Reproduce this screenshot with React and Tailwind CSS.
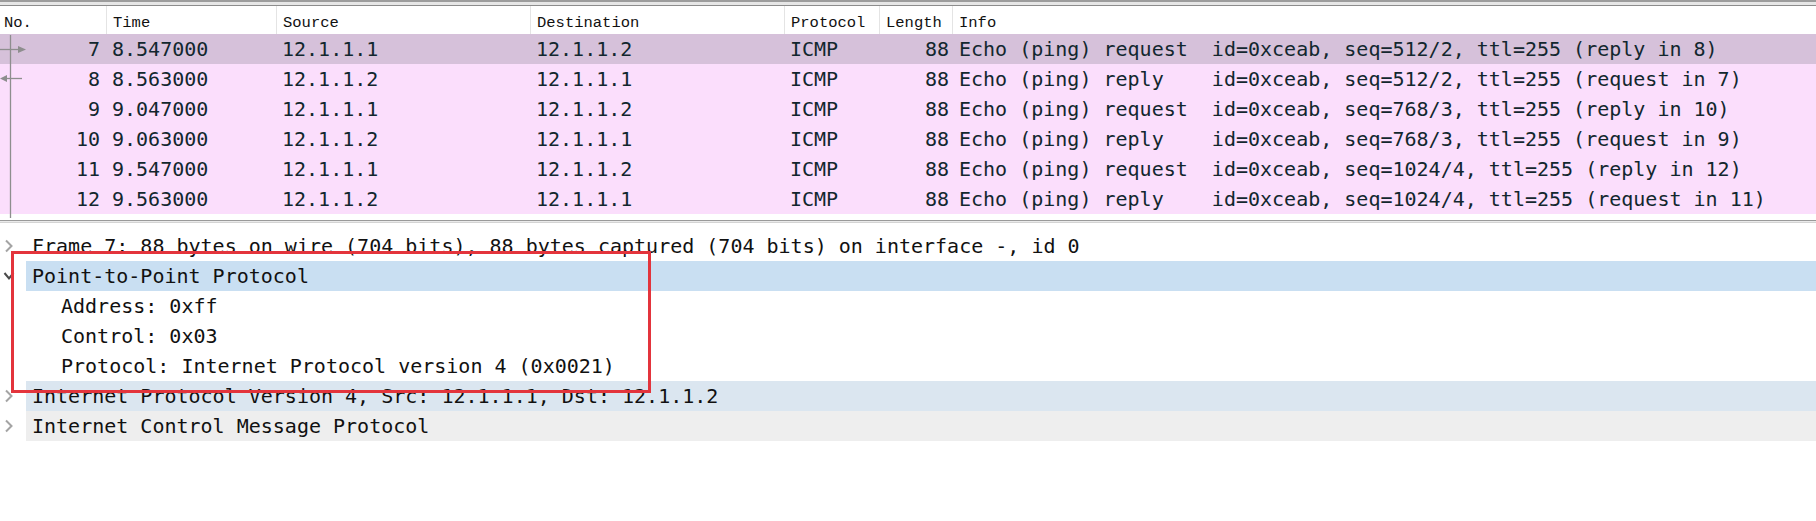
import React from "react";

const packets = [
  ["7", "8.547000", "12.1.1.1", "12.1.1.2", "ICMP", "88", "Echo (ping) request  id=0xceab, seq=512/2, ttl=255 (reply in 8)"],
  ["8", "8.563000", "12.1.1.2", "12.1.1.1", "ICMP", "88", "Echo (ping) reply    id=0xceab, seq=512/2, ttl=255 (request in 7)"],
  ["9", "9.047000", "12.1.1.1", "12.1.1.2", "ICMP", "88", "Echo (ping) request  id=0xceab, seq=768/3, ttl=255 (reply in 10)"],
  ["10", "9.063000", "12.1.1.2", "12.1.1.1", "ICMP", "88", "Echo (ping) reply    id=0xceab, seq=768/3, ttl=255 (request in 9)"],
  ["11", "9.547000", "12.1.1.1", "12.1.1.2", "ICMP", "88", "Echo (ping) request  id=0xceab, seq=1024/4, ttl=255 (reply in 12)"],
  ["12", "9.563000", "12.1.1.2", "12.1.1.1", "ICMP", "88", "Echo (ping) reply    id=0xceab, seq=1024/4, ttl=255 (request in 11)"],
];

const headers = ["No.", "Time", "Source", "Destination", "Protocol", "Length", "Info"];

function Chevron({ open }) {
  if (open) {
    return (
      <svg width="14" height="14" viewBox="0 0 14 14" className="shrink-0">
        <polyline points="1.5,4 6,9.5 10.5,4" fill="none" stroke="#4a4a4a" strokeWidth="2" />
      </svg>
    );
  }
  return (
    <svg width="14" height="14" viewBox="0 0 14 14" className="shrink-0">
      <polyline points="3,1.5 8.5,7 3,12.5" fill="none" stroke="#a4a4a4" strokeWidth="2" />
    </svg>
  );
}

function TreeRow({ chevron, open, bg, indent, children }) {
  return (
    <div className="flex h-[30px] items-center">
      <div className="flex w-[26px] shrink-0 items-center pl-[3px]">
        {chevron ? <Chevron open={open} /> : null}
      </div>
      <div className={`flex h-full flex-1 items-center whitespace-pre ${bg} ${indent ? "pl-[35px]" : "pl-[6px]"}`}>
        {children}
      </div>
    </div>
  );
}

export default function App() {
  return (
    <div className="relative h-[521px] w-[1816px] overflow-hidden bg-white">
      {/* top double rule */}
      <div className="h-[6px] border-t-2 border-b border-t-[#9c9c9c] border-b-[#8c8c8c] bg-[#e6e6e6]" />

      {/* header */}
      <div className="grid h-[28px] grid-cols-[106px_170px_254px_254px_95px_73px_1fr] bg-white font-['Liberation_Mono',monospace] text-[15.5px] text-[#111]">
        {headers.map((h, i) => (
          <div
            key={h}
            className={`flex items-center pt-[6px] ${i === 0 ? "pl-[4px]" : "border-l border-[#e4e4e4] pl-[6px]"}`}
          >
            {h}
          </div>
        ))}
      </div>

      {/* packet rows */}
      <div className="relative font-['DejaVu_Sans_Mono',monospace] text-[20px] text-[#12272e]">
        {packets.map((p, r) => (
          <div
            key={p[0]}
            className={`grid h-[30px] grid-cols-[106px_170px_254px_254px_95px_73px_1fr] items-center whitespace-pre ${
              r === 0 ? "bg-[#d6c1da]" : "bg-[#fbdefc]"
            }`}
          >
            <div className="pr-[6px] text-right">{p[0]}</div>
            <div className="pl-[6px]">{p[1]}</div>
            <div className="pl-[6px]">{p[2]}</div>
            <div className="pl-[6px]">{p[3]}</div>
            <div className="pl-[6px]">{p[4]}</div>
            <div className="pr-[3px] text-right">{p[5]}</div>
            <div className="pl-[7px]">{p[6]}</div>
          </div>
        ))}
        <div className="h-[6px]" />
        {/* related-packet indicator */}
        <svg
          className="pointer-events-none absolute left-0 top-0"
          width="30"
          height="186"
          viewBox="0 0 30 186"
        >
          <line x1="10.5" y1="1" x2="10.5" y2="184" stroke="#8e8e8e" strokeWidth="1.3" />
          <line x1="0" y1="15.5" x2="21" y2="15.5" stroke="#8e8e8e" strokeWidth="1.3" />
          <polygon points="18,12 26,15.5 18,19" fill="#8e8e8e" />
          <line x1="3" y1="44.5" x2="22" y2="44.5" stroke="#8e8e8e" strokeWidth="1.3" />
          <polygon points="7,41 0,44.5 7,48" fill="#8e8e8e" />
        </svg>
      </div>

      {/* splitter */}
      <div className="h-[3px] border-t border-b border-t-[#9a9a9a] border-b-[#d4d4d4] bg-[#eaeaea]" />
      <div className="h-[8px]" />

      {/* detail tree */}
      <div className="font-['DejaVu_Sans_Mono',monospace] text-[20px] text-[#111]">
        <TreeRow chevron bg="bg-white">
          Frame 7: 88 bytes on wire (704 bits), 88 bytes captured (704 bits) on interface -, id 0
        </TreeRow>
        <TreeRow chevron open bg="bg-[#c9dff2]">
          Point-to-Point Protocol
        </TreeRow>
        <TreeRow bg="bg-white" indent>
          Address: 0xff
        </TreeRow>
        <TreeRow bg="bg-white" indent>
          Control: 0x03
        </TreeRow>
        <TreeRow bg="bg-white" indent>
          Protocol: Internet Protocol version 4 (0x0021)
        </TreeRow>
        <TreeRow chevron bg="bg-[#dbe6f0]">
          Internet Protocol Version 4, Src: 12.1.1.1, Dst: 12.1.1.2
        </TreeRow>
        <TreeRow chevron bg="bg-[#eeeeee]">
          Internet Control Message Protocol
        </TreeRow>
      </div>

      {/* red annotation box */}
      <div className="pointer-events-none absolute left-[11px] top-[251px] h-[142px] w-[640px] border-[3px] border-[#e3343c]" />
    </div>
  );
}
